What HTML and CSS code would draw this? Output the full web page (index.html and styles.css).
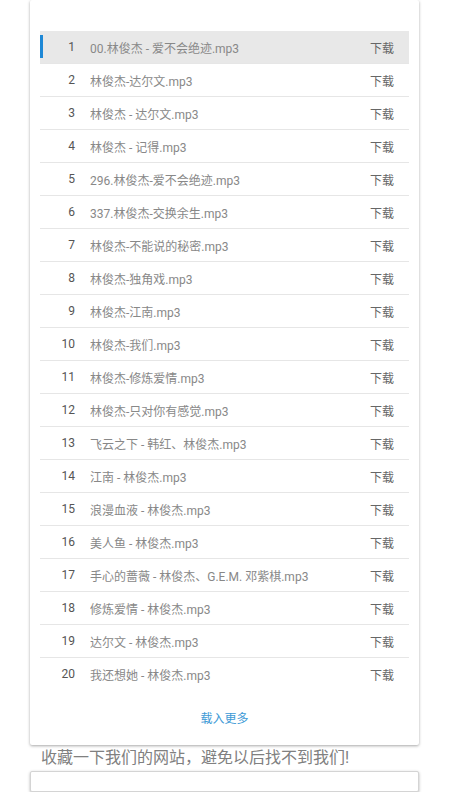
FILE: index.html
```html
<!DOCTYPE html>
<html lang="zh-CN">
<head>
<meta charset="utf-8">
<title>林俊杰</title>
<link rel="stylesheet" href="styles.css">
</head>
<body>
<div class="card">
  <ul class="list">
    <li class="row active"><span class="num">1</span><span class="title">00.林俊杰 - 爱不会绝迹.mp3</span><span class="dl">下载</span></li>
    <li class="row"><span class="num">2</span><span class="title">林俊杰-达尔文.mp3</span><span class="dl">下载</span></li>
    <li class="row"><span class="num">3</span><span class="title">林俊杰 - 达尔文.mp3</span><span class="dl">下载</span></li>
    <li class="row"><span class="num">4</span><span class="title">林俊杰 - 记得.mp3</span><span class="dl">下载</span></li>
    <li class="row"><span class="num">5</span><span class="title">296.林俊杰-爱不会绝迹.mp3</span><span class="dl">下载</span></li>
    <li class="row"><span class="num">6</span><span class="title">337.林俊杰-交换余生.mp3</span><span class="dl">下载</span></li>
    <li class="row"><span class="num">7</span><span class="title">林俊杰-不能说的秘密.mp3</span><span class="dl">下载</span></li>
    <li class="row"><span class="num">8</span><span class="title">林俊杰-独角戏.mp3</span><span class="dl">下载</span></li>
    <li class="row"><span class="num">9</span><span class="title">林俊杰-江南.mp3</span><span class="dl">下载</span></li>
    <li class="row"><span class="num">10</span><span class="title">林俊杰-我们.mp3</span><span class="dl">下载</span></li>
    <li class="row"><span class="num">11</span><span class="title">林俊杰-修炼爱情.mp3</span><span class="dl">下载</span></li>
    <li class="row"><span class="num">12</span><span class="title">林俊杰-只对你有感觉.mp3</span><span class="dl">下载</span></li>
    <li class="row"><span class="num">13</span><span class="title">飞云之下 - 韩红、林俊杰.mp3</span><span class="dl">下载</span></li>
    <li class="row"><span class="num">14</span><span class="title">江南 - 林俊杰.mp3</span><span class="dl">下载</span></li>
    <li class="row"><span class="num">15</span><span class="title">浪漫血液 - 林俊杰.mp3</span><span class="dl">下载</span></li>
    <li class="row"><span class="num">16</span><span class="title">美人鱼 - 林俊杰.mp3</span><span class="dl">下载</span></li>
    <li class="row"><span class="num">17</span><span class="title">手心的蔷薇 - 林俊杰、G.E.M. 邓紫棋.mp3</span><span class="dl">下载</span></li>
    <li class="row"><span class="num">18</span><span class="title">修炼爱情 - 林俊杰.mp3</span><span class="dl">下载</span></li>
    <li class="row"><span class="num">19</span><span class="title">达尔文 - 林俊杰.mp3</span><span class="dl">下载</span></li>
    <li class="row last"><span class="num">20</span><span class="title">我还想她 - 林俊杰.mp3</span><span class="dl">下载</span></li>
  </ul>
  <div class="more">载入更多</div>
</div>
<p class="notice">收藏一下我们的网站，避免以后找不到我们!</p>
<div class="box"></div>
</body>
</html>
```
FILE: styles.css
```css
html, body {
  margin: 0;
  padding: 0;
  background: #ffffff;
}
body {
  font-family: Roboto, "Noto Sans CJK SC", sans-serif;
  padding: 0 31px 0 30px;
}
.card {
  background: #fff;
  box-shadow: 0 1px 3px rgba(0, 0, 0, 0.35);
  padding: 31px 10px 0 10px;
  border-radius: 2px;
}
.list {
  list-style: none;
  margin: 0;
  padding: 0;
}
.row {
  position: relative;
  display: flex;
  align-items: center;
  height: 32px;
  border-bottom: 1px solid #e6e6e6;
  font-size: 12px;
}
.row.last {
  border-bottom: none;
}
.row.active {
  background: #e8e8e8;
}
.row.active::before {
  content: "";
  position: absolute;
  left: 0;
  top: 4px;
  width: 3px;
  height: 23px;
  background: #1e88d6;
}
.num {
  width: 35px;
  text-align: right;
  color: #555;
  flex: none;
}
.title {
  flex: 1;
  margin-left: 15px;
  color: #888;
  white-space: nowrap;
  overflow: hidden;
}
.dl {
  flex: none;
  color: #666;
  margin-right: 15px;
}
.more {
  height: 55px;
  display: flex;
  align-items: center;
  justify-content: center;
  color: #3d9ad6;
  font-size: 12px;
}
.notice {
  margin: 0;
  padding: 3px 0 0 11px;
  font-size: 16px;
  line-height: 20px;
  color: #808080;
}
.box {
  margin-top: 3px;
  height: 19px;
  background: #fff;
  border: 1px solid #d4d4d4;
  box-shadow: 0 1px 3px rgba(0, 0, 0, 0.3);
  border-radius: 2px;
}
```
